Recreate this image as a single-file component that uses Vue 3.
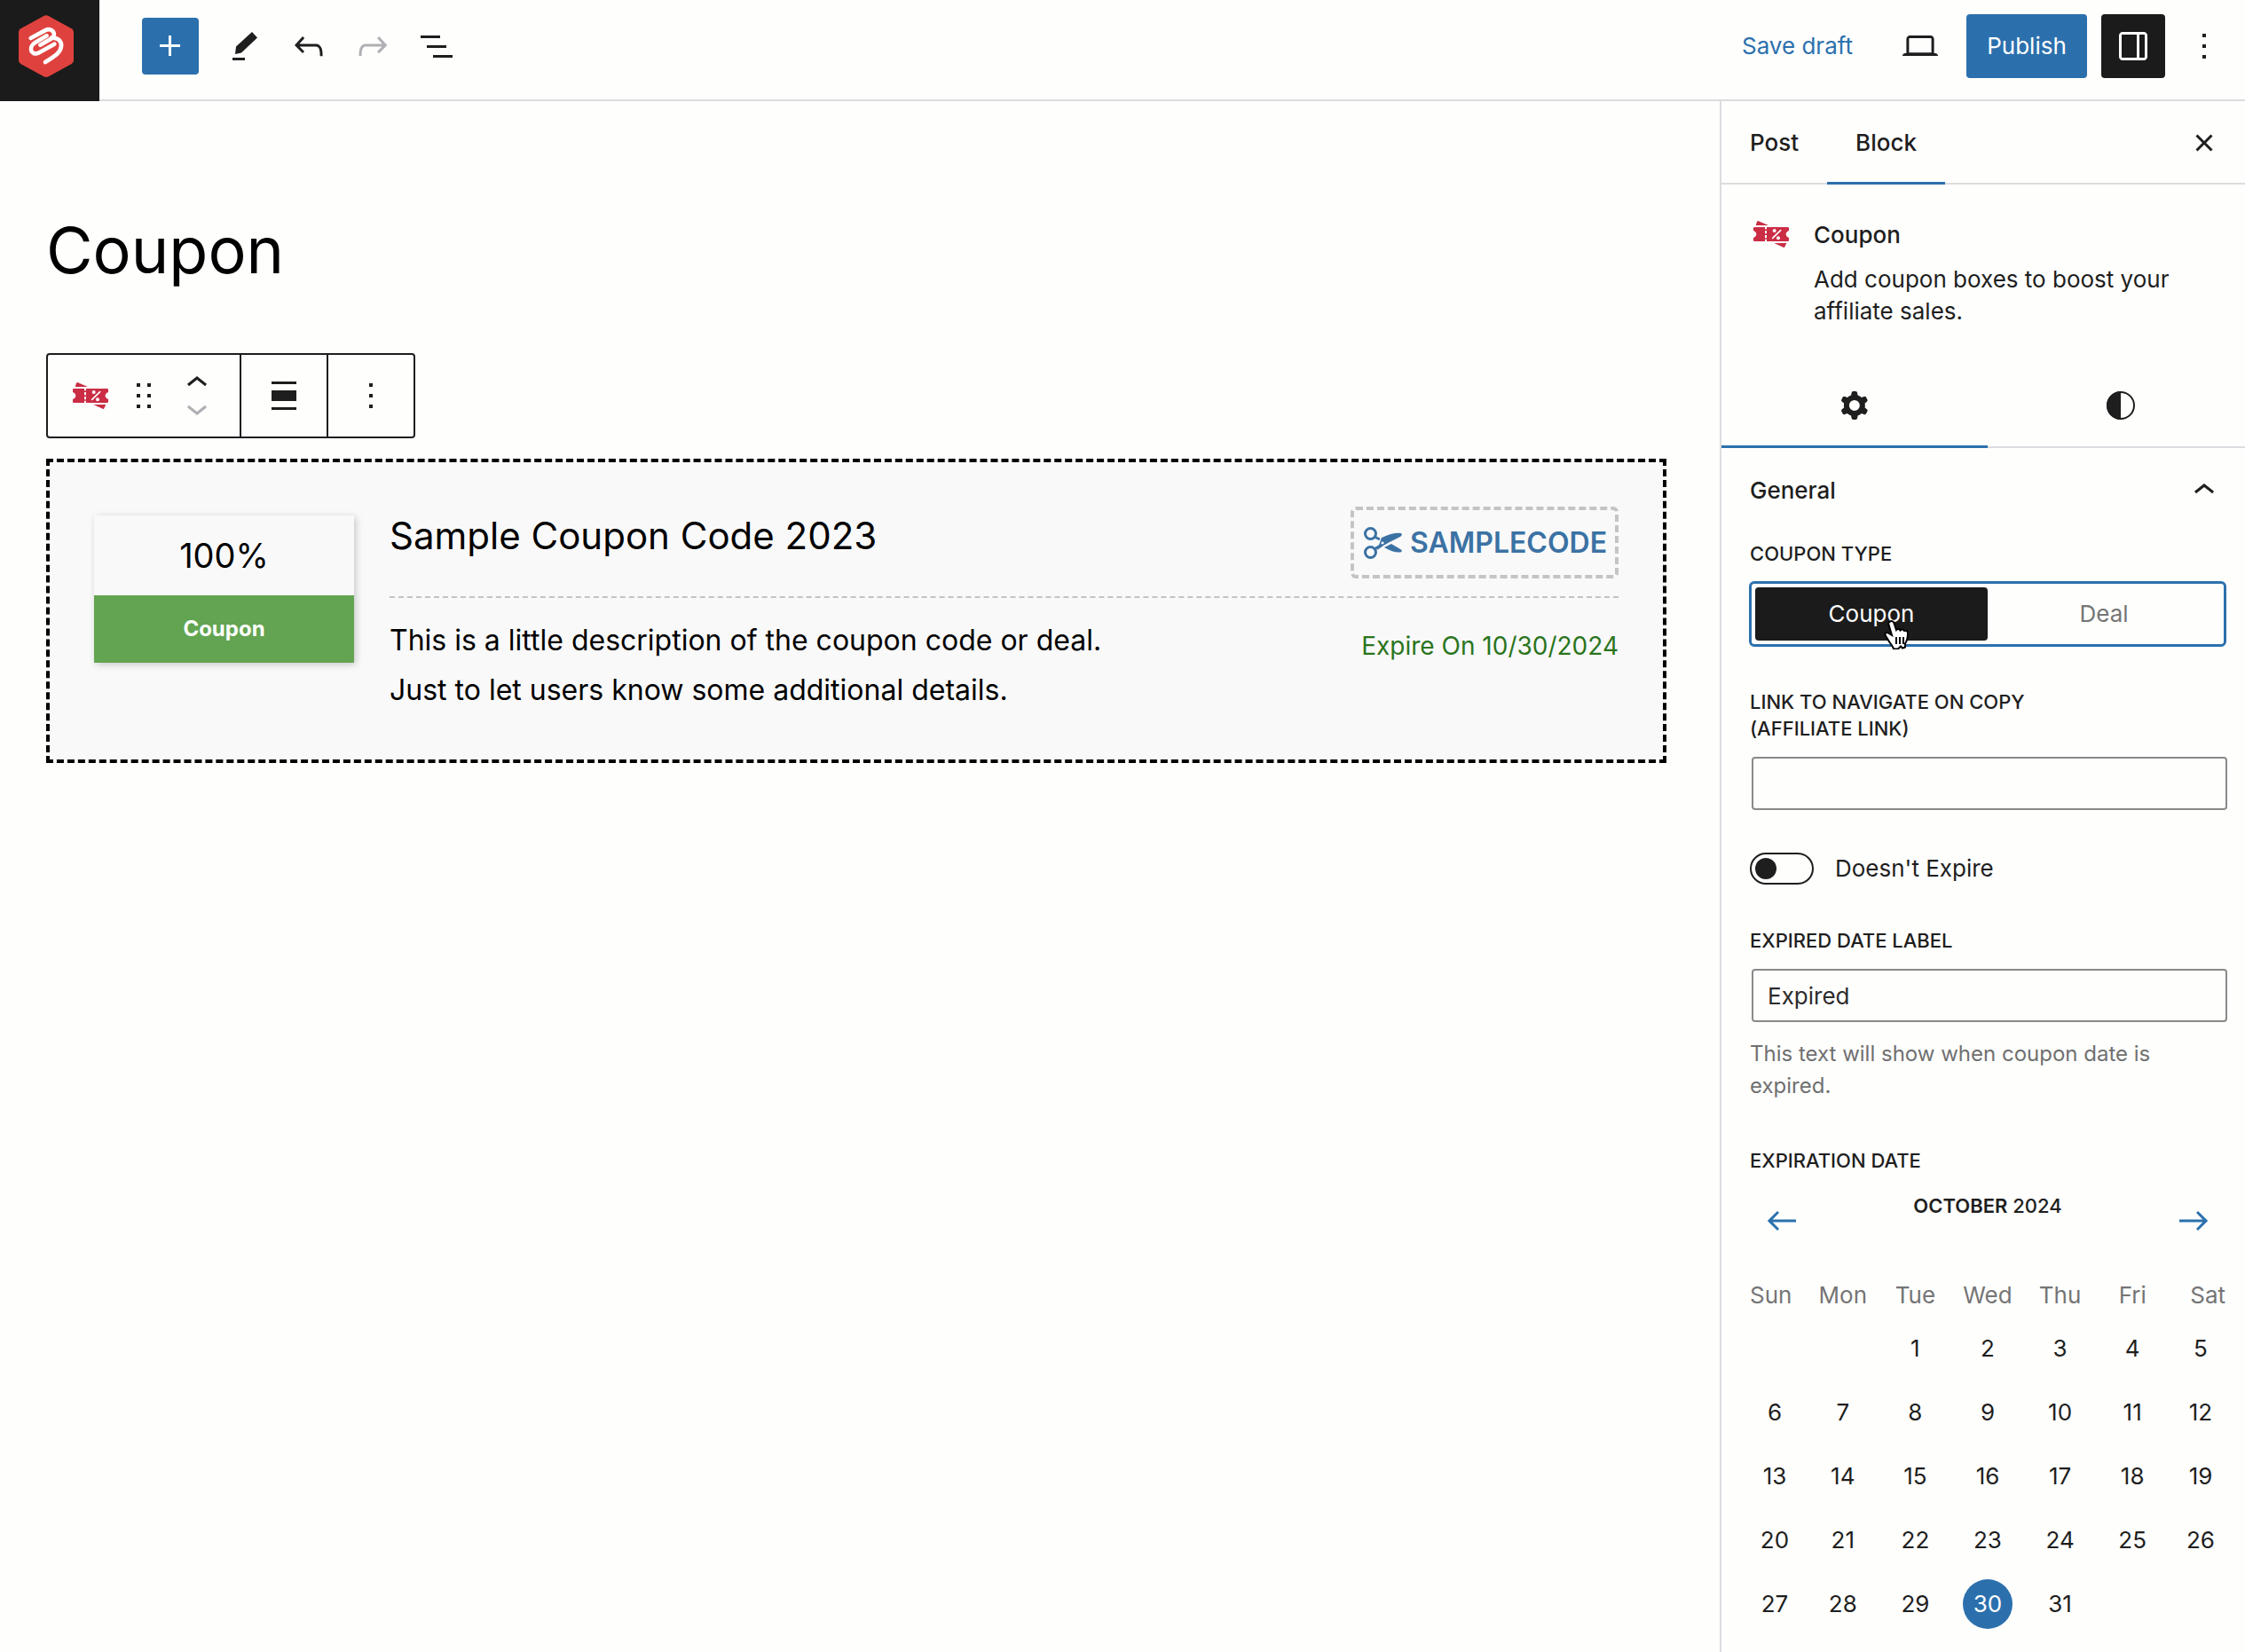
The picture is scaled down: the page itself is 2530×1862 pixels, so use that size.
<template>
  <div class="editor">
    <header class="topbar">
      <a href="#" class="site-logo" aria-label="Back to posts">
        <svg viewBox="0 0 240 252" width="80" height="84">
          <path class="hex" d="M112 24q8-4 16 0l78 43q7 4 7 12v95q0 8-7 12l-78 43q-8 4-16 0l-78-43q-7-4-7-12V79q0-8 7-12z" />
          <g class="mark">
            <path d="M68 99L116 73C138 62 158 84 140 99L100 122" />
            <path d="M122 91L84 113C58 128 68 160 94 149L148 119" />
            <path d="M138 98C156 96 173 106 171 127C169 146 154 157 117 180" />
          </g>
        </svg>
      </a>
      <div class="topbar-inner">
        <button class="add-btn" aria-label="Add block">
          <svg viewBox="0 0 24 24" class="icon"><path :d="icons.plus" /></svg>
        </button>
        <div class="tools">
          <button aria-label="Tools">
            <svg viewBox="0 0 48 48" class="icon"><path :d="icons.pencil" /></svg>
          </button>
          <button aria-label="Undo">
            <svg viewBox="0 0 24 24" class="icon"><path :d="icons.undo" /></svg>
          </button>
          <button class="disabled" aria-label="Redo">
            <svg viewBox="0 0 24 24" class="icon"><path :d="icons.redo" /></svg>
          </button>
          <button aria-label="Document overview">
            <svg viewBox="0 0 24 24" class="icon"><path :d="icons.list" /></svg>
          </button>
        </div>
        <div class="actions">
          <button class="save-btn">Save draft</button>
          <button class="view-btn" aria-label="View">
            <svg viewBox="0 0 24 24" class="icon"><path :d="icons.laptop" /></svg>
          </button>
          <button class="publish-btn">Publish</button>
          <button class="settings-btn" aria-label="Settings">
            <svg viewBox="0 0 24 24" class="icon"><path :d="icons.drawer" /></svg>
          </button>
          <button class="more-btn" aria-label="Options">
            <svg viewBox="0 0 24 24" class="icon"><path :d="icons.more" /></svg>
          </button>
        </div>
      </div>
    </header>

    <div class="body">
      <main class="canvas">
        <h1 class="post-title">Coupon</h1>

        <div class="block-toolbar">
          <div class="group">
            <button aria-label="Coupon">
              <svg viewBox="0 0 120 90" class="ticket">
                <path :d="icons.ticket" />
                <g class="percent">
                  <path d="M92 32L65 58" />
                  <circle cx="71" cy="33" r="6" />
                  <circle cx="84" cy="58" r="6" />
                </g>
              </svg>
            </button>
            <button aria-label="Drag">
              <svg viewBox="0 0 24 24" class="icon"><path :d="icons.drag" /></svg>
            </button>
            <div class="movers">
              <button aria-label="Move up">
                <svg viewBox="0 0 24 19" class="mover"><path :d="icons.up" /></svg>
              </button>
              <button class="disabled" aria-label="Move down">
                <svg viewBox="0 5 24 19" class="mover"><path :d="icons.down" /></svg>
              </button>
            </div>
          </div>
          <div class="group">
            <button aria-label="Align">
              <svg viewBox="0 0 24 24" class="icon"><path :d="icons.align" /></svg>
            </button>
          </div>
          <div class="group">
            <button aria-label="Options">
              <svg viewBox="0 0 24 24" class="icon"><path :d="icons.more" /></svg>
            </button>
          </div>
        </div>

        <section class="coupon">
          <div class="badge">
            <div class="discount">100%</div>
            <div class="kind">{{ couponType }}</div>
          </div>
          <div class="coupon-content">
            <div class="coupon-head">
              <h2>Sample Coupon Code 2023</h2>
              <button class="code">
                <svg viewBox="0 0 43 36" class="scissors">
                  <g class="rings">
                    <circle cx="7.5" cy="7.5" r="6" />
                    <circle cx="7.5" cy="28.5" r="6" />
                    <path d="M12 11l6 3M12 25l8-5" />
                  </g>
                  <path fill-rule="evenodd" d="M15 26L20 12Q33 6 42 7Q44 9 41 11L28 17.5L22 21ZM21 16.5a1.5 1.5 0 1 0 .1 0zM23 23L31 19L42 25.5Q44 28 41 28.5Q33 29 23 23Z" />
                </svg>
                <span>SAMPLECODE</span>
              </button>
            </div>
            <div class="coupon-info">
              <p class="desc">
                This is a little description of the coupon code or deal.<br />
                Just to let users know some additional details.
              </p>
              <p class="expire">Expire On 10/30/2024</p>
            </div>
          </div>
        </section>
      </main>

      <aside class="sidebar">
        <div class="sidebar-tabs">
          <button>Post</button>
          <button class="active">Block</button>
          <button class="close-btn" aria-label="Close">
            <svg viewBox="0 0 24 24" class="icon"><path :d="icons.close" /></svg>
          </button>
        </div>

        <div class="block-card">
          <svg viewBox="0 0 120 90" class="ticket">
            <path :d="icons.ticket" />
            <g class="percent">
              <path d="M92 32L65 58" />
              <circle cx="71" cy="33" r="6" />
              <circle cx="84" cy="58" r="6" />
            </g>
          </svg>
          <div>
            <h2>Coupon</h2>
            <p>Add coupon boxes to boost your affiliate sales.</p>
          </div>
        </div>

        <div class="inspector-tabs">
          <button class="active" aria-label="Settings">
            <svg viewBox="0 0 24 24" class="icon"><path fill-rule="evenodd" :d="icons.cog" /></svg>
          </button>
          <button aria-label="Styles">
            <svg viewBox="0 0 48 48" class="icon">
              <circle class="ring" cx="24" cy="24" r="15" />
              <path d="M24 8a16 16 0 0 0 0 32z" />
            </svg>
          </button>
        </div>

        <div class="panel">
          <button class="panel-header">
            <span>General</span>
            <svg viewBox="0 0 24 24" class="icon"><path :d="icons.up" /></svg>
          </button>

          <div id="type-label" class="label">Coupon Type</div>
          <div class="type-switch" role="radiogroup" aria-labelledby="type-label">
            <button
              v-for="t in types"
              :key="t"
              role="radio"
              :aria-checked="t === couponType"
              :class="{ selected: t === couponType }"
              @click="couponType = t"
            >
              {{ t }}
            </button>
            <svg viewBox="0 0 28 33" class="pointer">
              <path d="M7 1.5c2-1 4 0 4.500 2L14 11c1-1.500 3.500-1.500 4.500.5 1.500-1.500 3.500-1 4.500.5 2-1 4 .5 4 2.500 0 6-1 9-3 12v4l-3 1-2-2-3 3h-5c-1-4-4-6-6-10-1.500-3-4-5-3.500-7 .5-2 3-2 4.500-.5L9 17 5.500 5c-.5-1.500 0-3 1.500-3.500z" />
              <path class="fingers" d="M14 19v8M18 19v8M22 19v8" />
            </svg>
          </div>

          <label class="label link-label" for="link">Link to navigate on copy (affiliate link)</label>
          <input id="link" v-model="link" type="text" class="text-input" />

          <div class="toggle-row">
            <input id="no-expire" v-model="noExpire" type="checkbox" class="toggle" />
            <label for="no-expire">Doesn't Expire</label>
          </div>

          <label class="label" for="expired">Expired Date Label</label>
          <input id="expired" v-model="expiredLabel" type="text" class="text-input" />
          <p class="help">This text will show when coupon date is expired.</p>

          <div class="label">Expiration Date</div>
          <div class="month-nav">
            <button aria-label="Previous month">
              <svg viewBox="0 0 24 24" class="icon"><path :d="icons.left" /></svg>
            </button>
            <div class="month"><strong>October</strong> 2024</div>
            <button aria-label="Next month">
              <svg viewBox="0 0 24 24" class="icon"><path :d="icons.right" /></svg>
            </button>
          </div>
          <table class="calendar">
            <thead>
              <tr>
                <th v-for="d in days" :key="d">{{ d }}</th>
              </tr>
            </thead>
            <tbody>
              <tr v-for="(week, wi) in weeks" :key="wi">
                <td v-for="(day, di) in week" :key="di">
                  <button v-if="day" :class="{ picked: day === selectedDay }" @click="selectedDay = day">{{ day }}</button>
                </td>
              </tr>
            </tbody>
          </table>
        </div>
      </aside>
    </div>
  </div>
</template>

<script setup>
import { ref, computed } from 'vue'

const types = ['Coupon', 'Deal']
const couponType = ref('Coupon')
const link = ref('')
const noExpire = ref(false)
const expiredLabel = ref('Expired')
const selectedDay = ref(30)

const days = ['Sun', 'Mon', 'Tue', 'Wed', 'Thu', 'Fri', 'Sat']

const weeks = computed(() => {
  const offset = new Date(2024, 9, 1).getDay()
  const total = new Date(2024, 10, 0).getDate()
  const rows = []
  for (let start = 1 - offset; start <= total; start += 7) {
    rows.push(days.map((_, i) => {
      const n = start + i
      return n > 0 && n <= total ? n : ''
    }))
  }
  return rows
})

const icons = {
  plus: 'M11 12.5V17.5H12.5V12.5H17.5V11H12.5V6H11V11H6V12.5H11Z',
  pencil: 'M32 8l6 6.5L20 31.5 13 33l1-8.5zM10 37h14v3H10z',
  undo: 'M18.3 11.7c-.6-.6-1.4-.9-2.3-.9H6.7l2.9-3.3-1.1-1-4.5 5L8.5 16l1-1-2.7-2.7H16c.5 0 .9.2 1.3.5 1 1 1 3.4 1 4.5v.3h1.5v-.2c0-1.5 0-4.3-1.5-5.7z',
  redo: 'M15.6 6.5l-1.1 1 2.9 3.3H8c-.9 0-1.7.3-2.3.9-1.4 1.5-1.4 4.2-1.4 5.6v.2h1.5v-.3c0-1.1 0-3.5 1-4.5.3-.3.7-.5 1.3-.5h9.2L14.5 15l1.1 1.1 4.6-4.6-4.6-5z',
  list: 'M3 6h11v1.5H3V6Zm3.5 5.5h11V13h-11v-1.5ZM21 17H10v1.5h11V17Z',
  laptop: 'M20.5 16h-.7V8c0-1.1-.9-2-2-2H6.2c-1.1 0-2 .9-2 2v8h-.7c-.8 0-1.5.7-1.5 1.5h20c0-.8-.7-1.5-1.5-1.5zM5.7 8c0-.3.2-.5.5-.5h11.6c.3 0 .5.2.5.5v7.6H5.7V8z',
  drawer: 'M18 4H6c-1.1 0-2 .9-2 2v12c0 1.1.9 2 2 2h12c1.1 0 2-.9 2-2V6c0-1.1-.9-2-2-2zm-4 14.5H6c-.3 0-.5-.2-.5-.5V6c0-.3.2-.5.5-.5h8v13zm4.5-.5c0 .3-.2.5-.5.5h-2.5v-13H18c.3 0 .5.2.5.5v12z',
  more: 'M13 19h-2v-2h2v2zm0-6h-2v-2h2v2zm0-6h-2V5h2v2z',
  drag: 'M8 7h2V5H8v2zm0 6h2v-2H8v2zm0 6h2v-2H8v2zm6-14v2h2V5h-2zm0 8h2v-2h-2v2zm0 6h2v-2h-2v2z',
  up: 'M6.5 12.4L12 8l5.5 4.4-.9 1.2L12 10l-4.5 3.6-1-1.2z',
  down: 'M17.5 11.6L12 16l-5.5-4.4.9-1.2L12 14l4.5-3.6 1 1.2z',
  align: 'M5 4h14v1.5H5V4zm0 5h14v6H5V9zm0 9.5h14V20H5v-1.5z',
  close: 'M12 13.06l3.712 3.713 1.061-1.06L13.061 12l3.712-3.712-1.06-1.06L12 10.938 8.288 7.227l-1.061 1.06L10.939 12l-3.712 3.712 1.06 1.061L12 13.061z',
  cog: 'M10.289 4.836A1 1 0 0111.275 4h1.306a1 1 0 01.987.836l.244 1.466c.787.26 1.503.679 2.108 1.218l1.393-.522a1 1 0 011.216.437l.653 1.13a1 1 0 01-.23 1.273l-1.148.944a6.025 6.025 0 010 2.435l1.149.946a1 1 0 01.23 1.272l-.653 1.13a1 1 0 01-1.216.437l-1.394-.522c-.605.54-1.32.958-2.108 1.218l-.244 1.466a1 1 0 01-.987.836h-1.306a1 1 0 01-.986-.836l-.244-1.466a5.995 5.995 0 01-2.108-1.218l-1.394.522a1 1 0 01-1.217-.436l-.653-1.131a1 1 0 01.23-1.272l1.149-.946a6.026 6.026 0 010-2.435l-1.148-.944a1 1 0 01-.23-1.272l.653-1.131a1 1 0 011.217-.437l1.393.522a5.994 5.994 0 012.108-1.218l.244-1.466zM14.929 12a3 3 0 11-6 0 3 3 0 016 0z',
  left: 'M20 11.2H6.8l3.7-3.7-1-1L3.9 12l5.6 5.5 1-1-3.7-3.7H20z',
  right: 'M14.5 6.5l-1 1 3.7 3.7H4v1.6h13.2l-3.7 3.7 1 1 5.6-5.5z',
  ticket: 'M16 0L51 15H8L12 3Q13 0 16 0zM70 75H112L106 88Q104 91 101 89zM4 21H39V28H45V21H116Q120 21 120 25V33Q110 37 110 45T120 57V65Q120 69 116 69H45V62H39V69H4Q0 69 0 65V57Q10 53 10 45T0 33V25Q0 21 4 21zM39 33V43H45V33zM39 48V58H45V48z'
}
</script>

<style>
body {
  background: #fefefd;
}
</style>

<style scoped>
* {
  box-sizing: border-box;
}

.editor {
  min-height: 100vh;
  display: flex;
  flex-direction: column;
  font-family: Inter, "Liberation Sans", sans-serif;
  font-size: 26px;
  line-height: 36px;
  color: #1e1e1e;
  background: #fefefd;
}

h1,
h2,
p {
  margin: 0;
}

button {
  display: flex;
  align-items: center;
  justify-content: center;
  padding: 0;
  border: none;
  background: none;
  color: inherit;
  font: inherit;
  cursor: pointer;
}

svg {
  display: block;
  flex: none;
  fill: currentColor;
}

.icon {
  width: 48px;
  height: 48px;
}

.disabled {
  color: #b0b0b4;
}

.topbar {
  display: flex;
  height: 114px;
}

.site-logo {
  width: 112px;
  padding: 10px 12px;
  background: #1b1b1b;
}

.hex {
  fill: #df423e;
}

.mark {
  fill: none;
  stroke: #fff;
  stroke-width: 14;
  stroke-linecap: round;
}

.topbar-inner {
  flex: 1;
  display: flex;
  align-items: center;
  gap: 28px;
  padding: 0 18px 8px 48px;
  border-bottom: 2px solid #dcdcde;
}

.add-btn {
  width: 64px;
  height: 64px;
  border-radius: 4px;
  background: #2b70ad;
  color: #fff;
}

.tools {
  display: flex;
  gap: 24px;
}

.actions {
  display: flex;
  gap: 16px;
  margin-left: auto;
}

.actions button {
  height: 72px;
  border-radius: 4px;
}

.save-btn {
  padding: 0 24px;
  color: #2b70ad;
}

.view-btn,
.settings-btn {
  width: 72px;
}

.actions .publish-btn {
  width: 136px;
  background: #2b70ad;
  color: #fff;
}

.actions .settings-btn {
  background: #1b1b1b;
  color: #fff;
}

.more-btn {
  width: 56px;
}

.body {
  flex: 1;
  display: flex;
}

.canvas {
  flex: 1;
  min-width: 0;
  padding: 118px 60px 40px 52px;
}

.post-title {
  font-size: 72px;
  line-height: 100px;
  font-weight: 400;
  color: #000;
}

.block-toolbar {
  display: inline-flex;
  height: 96px;
  margin: 66px 0 23px;
  border: 2px solid #1e1e1e;
  border-radius: 4px;
  vertical-align: top;
}

.group {
  display: flex;
  align-items: center;
  gap: 12px;
  padding: 0 24px;
}

.group + .group {
  border-left: 2px solid #1e1e1e;
}

.ticket {
  width: 40px;
  height: 30px;
  margin: 0 4px;
  fill: #cb2d45;
}

.percent {
  fill: #fff;
  stroke: #fff;
  stroke-width: 5;
  stroke-linecap: round;
}

.percent circle {
  stroke: none;
}

.mover {
  width: 48px;
  height: 38px;
}

.coupon {
  display: flex;
  align-items: flex-start;
  gap: 40px;
  padding: 50px;
  border: 4px dashed #000;
  background: #f9f9f9;
  color: #000;
}

.badge {
  width: 293px;
  margin-top: 10px;
  text-align: center;
  box-shadow: 2px 2px 8px rgba(0, 0, 0, 0.2);
}

.discount {
  font-size: 38px;
  line-height: 90px;
}

.kind {
  background: #62a451;
  color: #fff;
  font-size: 24px;
  line-height: 76px;
  font-weight: 700;
}

.coupon-content {
  flex: 1;
}

.coupon-head {
  display: flex;
  justify-content: space-between;
  padding-bottom: 20px;
  border-bottom: 2px dashed #c4c4c4;
}

.coupon-head h2 {
  font-size: 42px;
  line-height: 66px;
  font-weight: 400;
}

.code {
  height: 81px;
  gap: 9px;
  padding: 0 9px 0 11px;
  border: 4px dashed #c4c4c4;
  border-radius: 6px;
  color: #3b72a4;
  font-size: 32px;
  font-weight: 600;
}

.scissors {
  width: 43px;
  height: 36px;
}

.rings {
  fill: none;
  stroke: currentColor;
  stroke-width: 3;
}

.coupon-info {
  display: flex;
  justify-content: space-between;
  padding-top: 20px;
}

.desc {
  font-size: 32px;
  line-height: 56px;
}

.expire {
  margin-top: 10px;
  font-size: 28px;
  line-height: 48px;
  color: #2b751d;
}

.sidebar {
  width: 592px;
  flex: none;
  overflow: hidden;
  border-left: 2px solid #dcdcde;
}

.sidebar-tabs {
  display: flex;
  height: 94px;
  padding-right: 22px;
  box-shadow: inset 0 -2px #dcdcde;
}

.sidebar-tabs button {
  padding: 0 32px;
  font-weight: 500;
}

.sidebar-tabs .close-btn {
  margin-left: auto;
  padding: 0;
}

.sidebar-tabs .active,
.inspector-tabs .active {
  box-shadow: inset 0 -3px #2b70ad;
}

.block-card {
  display: flex;
  gap: 24px;
  padding: 33px 32px 39px;
}

.block-card .ticket {
  margin-top: 8px;
}

.block-card h2 {
  margin-bottom: 8px;
  font-size: 26px;
  line-height: 48px;
  font-weight: 500;
}

.inspector-tabs {
  display: grid;
  grid-template-columns: 300px 300px;
  height: 97px;
  box-shadow: inset 0 -2px #dcdcde;
}

.ring {
  fill: none;
  stroke: currentColor;
  stroke-width: 2;
}

.panel {
  padding: 0 22px 16px 32px;
}

.panel-header {
  width: 100%;
  height: 96px;
  justify-content: space-between;
  margin-bottom: 8px;
  font-weight: 500;
}

.label {
  display: block;
  font-size: 22px;
  line-height: 30px;
  font-weight: 500;
  text-transform: uppercase;
}

.link-label {
  max-width: 400px;
}

.type-switch {
  position: relative;
  display: grid;
  grid-template-columns: 1fr 1fr;
  height: 74px;
  margin: 16px -1px 47px;
  padding: 4px;
  border: 3px solid #2b70ad;
  border-radius: 6px;
}

.type-switch button {
  border-radius: 4px;
  color: #757575;
}

.type-switch .selected {
  background: #1b1b1b;
  color: #fff;
}

/* hand cursor resting over the selected option */
.pointer {
  position: absolute;
  left: 149px;
  top: 41px;
  width: 28px;
  height: 33px;
  fill: #fff;
  stroke: #000;
  stroke-width: 2;
  pointer-events: none;
}

.text-input {
  display: block;
  width: 100%;
  height: 60px;
  margin: 17px 0 48px 2px;
  padding: 0 16px;
  border: 2px solid #8a8a8a;
  border-radius: 4px;
  background: transparent;
  color: #2c2c2c;
  font: inherit;
}

.toggle-row {
  display: flex;
  align-items: center;
  gap: 24px;
  margin-bottom: 48px;
}

.toggle {
  appearance: none;
  width: 72px;
  height: 36px;
  margin: 0;
  padding: 4px;
  border: 2px solid #1e1e1e;
  border-radius: 18px;
}

.toggle::before {
  content: "";
  display: block;
  width: 24px;
  height: 24px;
  border-radius: 50%;
  background: #1e1e1e;
}

.toggle:checked::before {
  margin-left: auto;
}

.help {
  margin: -30px 0 51px;
  font-size: 24px;
  color: #707070;
}

.month-nav {
  display: flex;
  justify-content: space-between;
  align-items: flex-end;
  height: 56px;
  margin: 21px 0 36px;
  padding: 0 12px;
  color: #2b70ad;
}

.month {
  align-self: flex-start;
  color: #1e1e1e;
  font-size: 22px;
  line-height: 30px;
  font-weight: 500;
  text-transform: uppercase;
}

.month strong {
  font-weight: 600;
}

.calendar {
  width: 100%;
  table-layout: fixed;
  border-collapse: collapse;
}

.calendar th,
.calendar td {
  height: 72px;
  padding: 0;
  text-align: center;
}

.calendar th {
  height: 48px;
  font-weight: 400;
  color: #757575;
}

.calendar th:first-child,
.calendar th:last-child {
  width: 64px;
}

.calendar th:first-child {
  text-align: left;
}

.calendar th:last-child {
  text-align: right;
}

.calendar button {
  width: 56px;
  height: 56px;
  margin: 0 auto;
  border-radius: 50%;
}

.calendar td:first-child button {
  margin-left: 0;
}

.calendar td:last-child button {
  margin-right: 0;
}

.calendar .picked {
  background: #2b70ad;
  color: #fff;
}
</style>
